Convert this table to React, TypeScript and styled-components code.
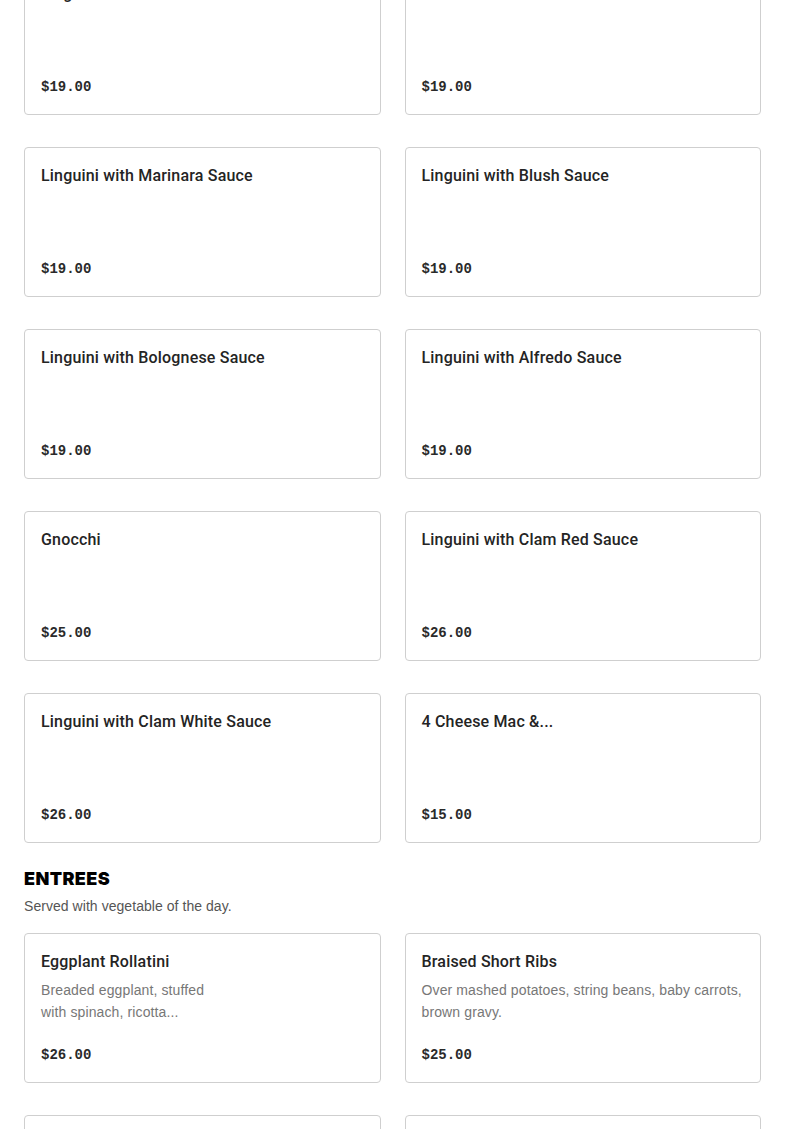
import React from "react";
import styled, { createGlobalStyle } from "styled-components";

const GlobalStyle = createGlobalStyle`
  html, body { margin: 0; padding: 0; background: #ffffff; }
  body { font-family: "Liberation Sans", Arial, sans-serif; color: #1f1f1f; }
  * { box-sizing: border-box; }
`;

const Page = styled.main`
  padding: 0 24px 40px;
  margin-top: -35px;
`;

const Section = styled.section`
  display: flex;
  flex-direction: column;
  & + & { margin-top: 24px; }
`;

const SectionTitle = styled.h2`
  margin: 0;
  font-family: Inter, "Liberation Sans", sans-serif;
  font-weight: 900;
  font-size: 18px;
  line-height: 24px;
  letter-spacing: 0.4px;
  color: #000;
`;

const SectionNote = styled.p`
  margin: 5px 0 17px;
  font-size: 14px;
  line-height: 20px;
  letter-spacing: 0.05px;
  color: #555;
`;

const Grid = styled.div`
  display: grid;
  grid-template-columns: 1fr 1fr;
  column-gap: 24px;
  row-gap: 32px;
`;

const Card = styled.article`
  display: flex;
  flex-direction: column;
  height: 150px;
  padding: 16px 16px 17px;
  border: 1px solid #cfcfcf;
  border-radius: 4px;
  background: #fff;
`;

const ItemName = styled.h3`
  margin: 0;
  font-family: Roboto, "Liberation Sans", sans-serif;
  font-weight: 500;
  font-size: 16px;
  line-height: 24px;
  letter-spacing: 0.18px;
  color: #242424;
`;

const ItemDesc = styled.p<{ $narrow?: boolean }>`
  margin: 5px 0 0;
  font-size: 14px;
  line-height: 22px;
  letter-spacing: 0.12px;
  color: #777;
  max-width: ${(p) => (p.$narrow ? "180px" : "none")};
`;

const Price = styled.span`
  margin-top: auto;
  font-family: "Liberation Mono", "DejaVu Sans Mono", monospace;
  font-weight: 700;
  font-size: 14px;
  line-height: 20px;
  color: #2a2a2a;
`;

type Item = { name: string; price: string; desc?: string; narrow?: boolean };

const pasta: Item[] = [
  { name: "Linguini with Garlic and Oil", price: "$19.00" },
  { name: "Penne alla Vodka Sauce", price: "$19.00" },
  { name: "Linguini with Marinara Sauce", price: "$19.00" },
  { name: "Linguini with Blush Sauce", price: "$19.00" },
  { name: "Linguini with Bolognese Sauce", price: "$19.00" },
  { name: "Linguini with Alfredo Sauce", price: "$19.00" },
  { name: "Gnocchi", price: "$25.00" },
  { name: "Linguini with Clam Red Sauce", price: "$26.00" },
  { name: "Linguini with Clam White Sauce", price: "$26.00" },
  { name: "4 Cheese Mac &...", price: "$15.00" },
];

const entrees: Item[] = [
  {
    name: "Eggplant Rollatini",
    desc: "Breaded eggplant, stuffed with spinach, ricotta...",
    narrow: true,
    price: "$26.00",
  },
  {
    name: "Braised Short Ribs",
    desc: "Over mashed potatoes, string beans, baby carrots, brown gravy.",
    price: "$25.00",
  },
  { name: "Chicken Parmigiana", price: "$24.00" },
  { name: "Chicken Francese", price: "$24.00" },
];

function MenuCard({ item }: { item: Item }) {
  return (
    <Card>
      <ItemName>{item.name}</ItemName>
      {item.desc && <ItemDesc $narrow={item.narrow}>{item.desc}</ItemDesc>}
      <Price>{item.price}</Price>
    </Card>
  );
}

export default function App() {
  return (
    <>
      <GlobalStyle />
      <Page>
        <Section>
          <Grid>
            {pasta.map((it) => (
              <MenuCard key={it.name} item={it} />
            ))}
          </Grid>
        </Section>
        <Section>
          <SectionTitle>ENTREES</SectionTitle>
          <SectionNote>Served with vegetable of the day.</SectionNote>
          <Grid>
            {entrees.map((it) => (
              <MenuCard key={it.name} item={it} />
            ))}
          </Grid>
        </Section>
      </Page>
    </>
  );
}
